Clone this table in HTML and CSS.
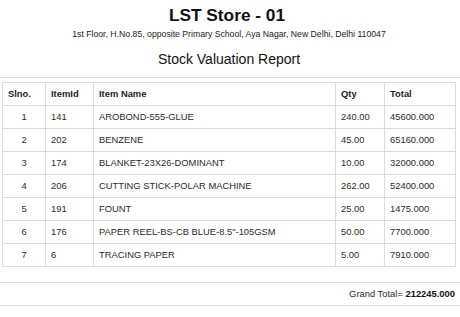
FILE: index.html
```html
<!DOCTYPE html>
<html>
<head>
<meta charset="utf-8">
<link rel="stylesheet" href="styles.css">
</head>
<body>
<div class="report">
  <header class="head">
    <h1 class="store">LST Store - 01</h1>
    <p class="addr">1st Floor, H.No.85, opposite Primary School, Aya Nagar, New Delhi, Delhi 110047</p>
    <h2 class="rtitle">Stock Valuation Report</h2>
  </header>
  <div class="rule"></div>
  <table class="grid">
    <colgroup>
      <col class="c-sl"><col class="c-id"><col class="c-name"><col class="c-qty"><col class="c-tot">
    </colgroup>
    <thead>
      <tr><th>Slno.</th><th>ItemId</th><th>Item Name</th><th>Qty</th><th>Total</th></tr>
    </thead>
    <tbody>
      <tr><td class="ctr">1</td><td>141</td><td>AROBOND-555-GLUE</td><td>240.00</td><td>45600.000</td></tr>
      <tr><td class="ctr">2</td><td>202</td><td>BENZENE</td><td>45.00</td><td>65160.000</td></tr>
      <tr><td class="ctr">3</td><td>174</td><td>BLANKET-23X26-DOMINANT</td><td>10.00</td><td>32000.000</td></tr>
      <tr><td class="ctr">4</td><td>206</td><td>CUTTING STICK-POLAR MACHINE</td><td>262.00</td><td>52400.000</td></tr>
      <tr><td class="ctr">5</td><td>191</td><td>FOUNT</td><td>25.00</td><td>1475.000</td></tr>
      <tr><td class="ctr">6</td><td>176</td><td>PAPER REEL-BS-CB BLUE-8.5"-105GSM</td><td>50.00</td><td>7700.000</td></tr>
      <tr><td class="ctr">7</td><td>6</td><td>TRACING PAPER</td><td>5.00</td><td>7910.000</td></tr>
    </tbody>
  </table>
  <div class="grand">Grand Total= <b>212245.000</b></div>
</div>
</body>
</html>
```
FILE: styles.css
```css
html, body {
  margin: 0;
  padding: 0;
  background: #fff;
}
body {
  font-family: "Liberation Sans", Arial, sans-serif;
  color: #2b2b2b;
}
.report {
  width: 460px;
}
.head {
  width: 458px;
  text-align: center;
  padding-top: 5px;
}
.store {
  margin: 0;
  padding-right: 4px;
  font-size: 17.3px;
  line-height: 20px;
  font-weight: bold;
  color: #111;
}
.addr {
  margin: 3.5px 0 0;
  font-size: 8.7px;
  line-height: 11px;
  color: #222;
}
.rtitle {
  margin: 11px 0 0;
  font-size: 14px;
  line-height: 17px;
  font-weight: normal;
  color: #111;
}
.rule {
  margin-top: 9px;
  border-top: 1px solid #dcdcdc;
}
.grid {
  margin: 4px 0 0 2px;
  width: 454px;
  table-layout: fixed;
  border-collapse: collapse;
  font-size: 9.4px;
  line-height: 12px;
}
.c-sl { width: 43px; }
.c-id { width: 48px; }
.c-name { width: 242px; }
.c-qty { width: 49px; }
.c-tot { width: 71px; }
.grid th,
.grid td {
  border: 1px solid #dcdcdc;
  padding: 5px 5px;
  text-align: left;
  white-space: nowrap;
  overflow: hidden;
}
.grid th {
  font-weight: bold;
  color: #1e1e1e;
}
.grid td.ctr {
  text-align: center;
}
.grand {
  margin-top: 15px;
  border-top: 1px solid #dcdcdc;
  border-bottom: 1px solid #dcdcdc;
  padding: 5px 5px 5px 0;
  font-size: 9.4px;
  line-height: 12px;
  text-align: right;
}
.grand b {
  color: #111;
}
```
